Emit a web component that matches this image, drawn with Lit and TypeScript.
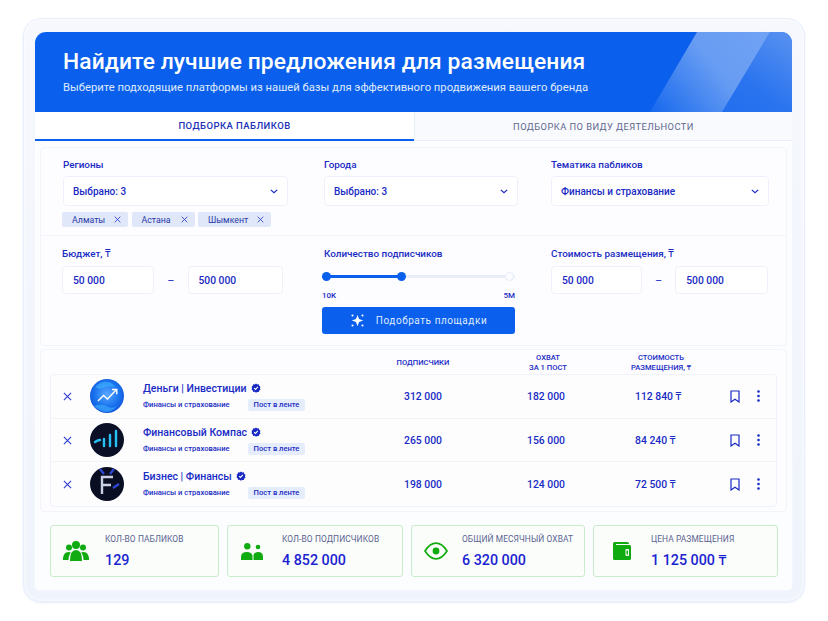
import { LitElement, html, css } from "lit";
import { customElement } from "lit/decorators.js";

const x = html`<svg viewBox="0 0 10 10" class="x"><path d="M1 1l8 8M9 1l-8 8"/></svg>`;
const chev = html`<svg viewBox="0 0 10 6" class="chev"><path d="M1 1l4 3.6L9 1"/></svg>`;
const check = html`<svg viewBox="0 0 24 24" class="check"><path fill="#1a2bc4" d="M12 1l3 2.3 3.7-.2 1 3.6 3 2.2L21.500 12.500l1.200 3.500-3 2.200-1 3.600-3.700-.2L12 23.500l-3-2.400-3.700.2-1-3.600-3-2.200 1.200-3.500L1.300 8.900l3-2.200 1-3.600 3.700.2z"/><path fill="none" stroke="#fff" stroke-width="2.600" d="M7.500 12.300l3.200 3.200 5.800-6"/></svg>`;

const avatars = [
  html`<svg viewBox="0 0 34 34" class="ava"><defs><radialGradient id="a1" cx="50%" cy="45%" r="60%"><stop offset="0" stop-color="#5aa8ff"/><stop offset=".6" stop-color="#1a74ee"/><stop offset="1" stop-color="#0f4fd8"/></radialGradient></defs><circle cx="17" cy="17" r="17" fill="url(#a1)"/><path d="M5 8q6-6 12-5 5 0 8 5-8-2-12 1-5 2-8-1zM4 27q8-3 14 1 5 2 9-1-5 6-11 6-7-1-12-6z" fill="#3fb4ff" opacity=".6"/><path d="M8 22l5.500-5.500 4 3.500L26 11" fill="none" stroke="#fff" stroke-width="1.400"/><path d="M22 10.500h4.800v4.800" fill="none" stroke="#fff" stroke-width="1.400"/></svg>`,
  html`<svg viewBox="0 0 34 34" class="ava"><circle cx="17" cy="17" r="17" fill="#0b1026"/><path d="M5 19q3-2 5-2M14 23v-7M20 23V12M26 23V8" fill="none" stroke="#25c2f2" stroke-width="2.400" stroke-linecap="round"/></svg>`,
  html`<svg viewBox="0 0 34 34" class="ava"><circle cx="17" cy="17" r="17" fill="#0a0e22"/><path d="M10 2l4 5M24 2l-4 5M23 21l6-4" stroke="#2f49d8" stroke-width="2.200"/><path d="M12 27V10h11M12 18h9" fill="none" stroke="#c9d2e4" stroke-width="2.400"/></svg>`,
];

const rows = [
  ["Деньги | Инвестиции", "312 000", "182 000", "112 840 ₸"],
  ["Финансовый Компас", "265 000", "156 000", "84 240 ₸"],
  ["Бизнес | Финансы", "198 000", "124 000", "72 500 ₸"],
];

const icons = [
  html`<svg viewBox="0 0 26 20" class="si" style="width:26px;height:20px"><g fill="#10ab10"><circle cx="13" cy="4" r="4"/><circle cx="6" cy="6.500" r="3"/><circle cx="20" cy="6.500" r="3"/><path d="M0 19q0-8 5.500-8 1.500 0 2.500.8Q5.500 14 5.500 19zM26 19q0-8-5.500-8-1.500 0-2.500.8 2.500 2.200 2.500 7.200zM7 20q0-11 6-11t6 11z"/></g></svg>`,
  html`<svg viewBox="0 0 22 17" class="si" style="width:22px;height:17px"><g fill="#10ab10"><circle cx="6.300" cy="3.300" r="3.200"/><circle cx="17" cy="4" r="2.300"/><path d="M0 17v-3q0-5 6-5 4.500 0 5.500 3.500V17zM12.500 17v-5q1-3 4.500-3 5 0 5 5v3z"/></g></svg>`,
  html`<svg viewBox="0 0 24 18" class="si" style="width:24px;height:18px"><path d="M1 9q5-7.800 11-7.800T23 9q-5 7.800-11 7.800T1 9z" fill="none" stroke="#10ab10" stroke-width="1.700"/><circle cx="12" cy="9" r="3.400" fill="#10ab10"/></svg>`,
  html`<svg viewBox="0 0 18 18" class="si" style="width:18px;height:18px"><path fill="#10ab10" d="M1.500 0H14q2 0 2 1.500V2H3v1h13.500q1.500 0 1.500 1.500V16.500q0 1.500-1.500 1.500H1.500Q0 18 0 16.500V1.500Q0 0 1.500 0z"/><rect x="12.500" y="7" width="3.500" height="7" rx="1" fill="#fff"/><rect x="13.500" y="8.500" width="1.500" height="4" fill="#10ab10"/></svg>`,
];
const stats = [
  ["КОЛ-ВО ПАБЛИКОВ", "129"],
  ["КОЛ-ВО ПОДПИСЧИКОВ", "4 852 000"],
  ["ОБЩИЙ МЕСЯЧНЫЙ ОХВАТ", "6 320 000"],
  ["ЦЕНА РАЗМЕЩЕНИЯ", "1 125 000 ₸"],
];

@customElement("app-root")
export class AppRoot extends LitElement {
  static styles = css`
    :host { display:block; width:828px; height:621px; background:#fff; font-family:Roboto,"Noto Sans",sans-serif; color:#1a2bc4; padding:18px 0 0 23px; box-sizing:border-box; overflow:hidden; }
    * { box-sizing:border-box; }
    .glass { width:782px; height:584px; border:1px solid #e8eefb; border-radius:18px; background:linear-gradient(180deg,#f6f8fd,#eff3fb); padding:13px 12px 0 11px; box-shadow:inset 0 0 4px #fff, 0 1px 2px #e6ecf9; }
    .card { width:757px; height:558px; background:#fcfdff; border-radius:11px 11px 4px 4px; overflow:hidden; display:flex; flex-direction:column; box-shadow:0 0 0 1px #f3f6fd; }
    .hero { height:80px; background:#0a60ec; padding:14px 0 0 28px; position:relative; overflow:hidden; color:#fff; flex:none; }
    .shade { position:absolute; top:0; bottom:0; right:0; left:615px; background:linear-gradient(215deg,#5a92f0,#2a74ef 45%,#1a68ec); clip-path:polygon(72px 100%,120px 0,100% 0,100% 100%); }
    .band { position:absolute; top:0; bottom:0; left:615px; width:120px; background:linear-gradient(50deg,rgba(255,255,255,.05),rgba(255,255,255,.38) 55%,rgba(255,255,255,.42)); clip-path:polygon(0 100%,47px 0,100% 0,72px 100%); }
    h1 { position:relative; margin:0; font:500 22.800px/32px Roboto,sans-serif; letter-spacing:.1px; white-space:nowrap; }
    .sub { position:relative; margin-top:2px; font-size:11.250px; line-height:16px; color:#dfeafd; white-space:nowrap; }
    .tabs { display:flex; height:29px; flex:none; }
    .tab { display:flex; align-items:center; justify-content:center; font-size:9.500px; letter-spacing:.45px; }
    .tab.on { width:379px; background:#fff; border-bottom:2px solid #0a60ec; padding-left:20px; color:#2030b8; font-weight:500; }
    .tab.off { flex:1; background:#f9fafd; border-left:1px solid #e9edf8; border-bottom:1px solid #e9edf8; color:#60688f; font-size:9.300px; font-weight:400; }
    .panel { margin:6px 5px 0; height:199px; flex:none; background:#fdfdff; border:1px solid #f1f4fb; border-radius:4px; padding:0 18px 0 22px; }
    .r1 { display:grid; grid-template-columns:261px 227px 218px; height:88px; padding-top:10px; border-bottom:1px solid #f1f4fb; margin:0 -18px 0 -22px; padding-left:22px; }
    .r1 > div:nth-child(1) > .sel { width:225px; }
    .r1 > div:nth-child(2) > .sel { width:194px; }
    .lab { font-size:9.900px; font-weight:500; line-height:14px; white-space:nowrap; }
    .mid .lab { padding-left:2px; }
    .sel { height:30px; margin-top:4px; background:#fff; border:1px solid #eef1fb; border-radius:4px; display:flex; align-items:center; justify-content:space-between; padding:0 9px; font-size:10px; font-weight:500; }
    .chev { width:8px; height:5px; fill:none; stroke:#1a2bc4; stroke-width:1.500; }
    .tags { display:flex; gap:3.500px; margin:6px 0 0 -1px; }
    .tag { height:15px; background:#dfe7f9; border-radius:2px; display:flex; align-items:center; justify-content:space-between; padding:0 7px 0 10px; font-size:8.800px; color:#2a3aa8; }
    .x { width:7px; height:7px; fill:none; stroke:#2a3ad0; stroke-width:1.200; }
    .r2 { display:grid; grid-template-columns:260px 229px 217px; padding-top:11px; margin-left:-1px; }
    .rng { display:flex; align-items:center; margin-top:5px; }
    .inp { height:28px; background:#fff; border:1px solid #eef1fb; border-radius:4px; display:flex; align-items:center; padding:0 10px; font-size:10.300px; font-weight:500; }
    .dash { width:33.500px; text-align:center; font-size:11px; }
    .mid { width:193px; }
    .sl { position:relative; height:9px; margin-top:11px; }
    .sl i { position:absolute; top:3px; height:3px; border-radius:2px; }
    .sl b { position:absolute; top:0; width:9px; height:9px; border-radius:50%; background:#0a60ec; }
    .sl em { position:absolute; top:0; right:1px; width:9px; height:9px; border-radius:50%; background:#fbfcff; border:1px solid #e6ebf6; }
    .ends { display:flex; justify-content:space-between; font-size:8px; font-weight:500; margin-top:9px; line-height:11px; }
    .btn { height:27px; background:#0a60ec; color:#dfeafd; border-radius:3px; margin-top:6px; display:flex; align-items:center; justify-content:center; gap:11px; font-size:10px; letter-spacing:.55px; font-weight:400; }
    .btn svg { width:15px; height:15px; fill:#fff; }
    .res { margin:3px 5px 0; height:163px; flex:none; background:#fdfdff; border:1px solid #f1f4fb; border-radius:4px; padding:0 9px; }
    .th { display:grid; grid-template-columns:313px 120px 130px 96px; height:24px; padding-top:1px; }
    .th div { text-align:center; font-size:7.600px; line-height:10px; font-weight:500; align-self:center; white-space:nowrap; }
    .th .a { grid-column:2; }
    .list { border:1px solid #eff2fa; border-radius:4px; background:#fdfdfe; }
    .row { height:43.700px; display:grid; grid-template-columns:39px 53px 261px 123px 108px 95px 1fr; align-items:center; border-bottom:1px solid #f1f3f9; }
    .row:last-child { border-bottom:0; }
    .cx { justify-self:start; width:9px; height:9px; margin-left:12px; }
    .ava { width:34px; height:34px; display:block; }
    .nm { font-size:10.500px; font-weight:500; display:flex; align-items:center; gap:4px; line-height:13px; white-space:nowrap; }
    .check { width:10px; height:10px; }
    .meta { display:flex; align-items:center; justify-content:space-between; width:162px; font-size:7.600px; font-weight:500; margin-top:4px; white-space:nowrap; }
    .pill { background:#e5ecfb; padding:0 5px; width:57px; text-align:center; height:12px; line-height:12px; border-radius:2px; }
    .num { font-size:10.400px; font-weight:500; white-space:nowrap; }
    .acts { display:flex; align-items:center; gap:17px; }
    .bm { width:10px; height:13px; fill:none; stroke:#1a2bc4; stroke-width:1.200; }
    .dots { width:3px; height:12px; }
    .stats { display:flex; gap:8px; margin:13px 0 0 15px; }
    .st { height:52px; border:1px solid #c9eccc; border-radius:3px; background:#fbfdfb; display:flex; align-items:center; flex:none; }
    .ic { display:flex; flex:none; }
    .st small { display:block; font-size:8.400px; color:#5a6390; line-height:11px; letter-spacing:.1px; white-space:nowrap; }
    .st strong { display:block; font-size:14.300px; font-weight:500; line-height:16px; margin-top:7px; white-space:nowrap; color:#1a23d0; }
  `;
  render() {
    const widths = [169, 176, 174, 185];
    const icW = [54, 54, 50, 57];
    const icL = [12, 13, 12, 19];
    const tagW = [66, 63, 73];
    return html`<div class="glass"><div class="card">
      <div class="hero"><div class="shade"></div><div class="band"></div>
        <h1>Найдите лучшие предложения для размещения</h1>
        <div class="sub">Выберите подходящие платформы из нашей базы для эффективного продвижения вашего бренда</div>
      </div>
      <div class="tabs"><div class="tab on">ПОДБОРКА ПАБЛИКОВ</div><div class="tab off">ПОДБОРКА ПО ВИДУ ДЕЯТЕЛЬНОСТИ</div></div>
      <div class="panel">
        <div class="r1">
          <div><div class="lab">Регионы</div><div class="sel">Выбрано: 3 ${chev}</div>
            <div class="tags">${["Алматы", "Астана", "Шымкент"].map((t, i) => html`<div class="tag" style="width:${tagW[i]}px">${t} ${x}</div>`)}</div></div>
          <div><div class="lab">Города</div><div class="sel">Выбрано: 3 ${chev}</div></div>
          <div><div class="lab">Тематика пабликов</div><div class="sel">Финансы и страхование ${chev}</div></div>
        </div>
        <div class="r2">
          <div><div class="lab">Бюджет, ₸</div><div class="rng"><div class="inp" style="width:92px">50 000</div><div class="dash">–</div><div class="inp" style="width:95px">500 000</div></div></div>
          <div class="mid"><div class="lab">Количество подписчиков</div>
            <div class="sl"><i style="left:0;right:0;background:#e9edf7"></i><i style="left:0;width:80px;background:#0a60ec"></i><b style="left:0"></b><b style="left:75px"></b><em></em></div>
            <div class="ends"><span>10K</span><span>5M</span></div>
            <div class="btn"><svg viewBox="0 0 24 24"><path d="M12 3l2.500 6.500L21 12l-6.500 2.500L12 21l-2.500-6.500L3 12l6.500-2.500z"/><circle cx="4" cy="4" r="1.700"/><circle cx="20" cy="4" r="1.700"/><circle cx="4" cy="20" r="1.700"/><circle cx="20" cy="20" r="1.700"/></svg>Подобрать площадки</div></div>
          <div><div class="lab">Стоимость размещения, ₸</div><div class="rng"><div class="inp" style="width:91px">50 000</div><div class="dash">–</div><div class="inp" style="width:93px">500 000</div></div></div>
        </div>
      </div>
      <div class="res">
        <div class="th"><div class="a">ПОДПИСЧИКИ</div><div>ОХВАТ<br />ЗА 1 ПОСТ</div><div>СТОИМОСТЬ<br />РАЗМЕЩЕНИЯ, ₸</div></div>
        <div class="list">${rows.map((r, i) => html`<div class="row">
          <svg viewBox="0 0 10 10" class="x cx"><path d="M1 1l8 8M9 1l-8 8"/></svg>${avatars[i]}
          <div><div class="nm">${r[0]} ${check}</div><div class="meta"><span>Финансы и страхование</span><span class="pill">Пост в ленте</span></div></div>
          <div class="num">${r[1]}</div><div class="num">${r[2]}</div><div class="num">${r[3]}</div>
          <div class="acts">
            <svg viewBox="0 0 10 13" class="bm"><path d="M1 1h8v11L5 9.300 1 12z"/></svg>
            <svg viewBox="0 0 3 12" class="dots"><g fill="#1a2bc4"><circle cx="1.500" cy="1.500" r="1.300"/><circle cx="1.500" cy="6" r="1.300"/><circle cx="1.500" cy="10.500" r="1.300"/></g></svg></div>
        </div>`)}</div>
      </div>
      <div class="stats">${stats.map((s, i) => html`<div class="st" style="width:${widths[i]}px"><div class="ic" style="width:${icW[i]}px;padding-left:${icL[i]}px">${icons[i]}</div><div><small>${s[0]}</small><strong>${s[1]}</strong></div></div>`)}</div>
    </div></div>`;
  }
}
